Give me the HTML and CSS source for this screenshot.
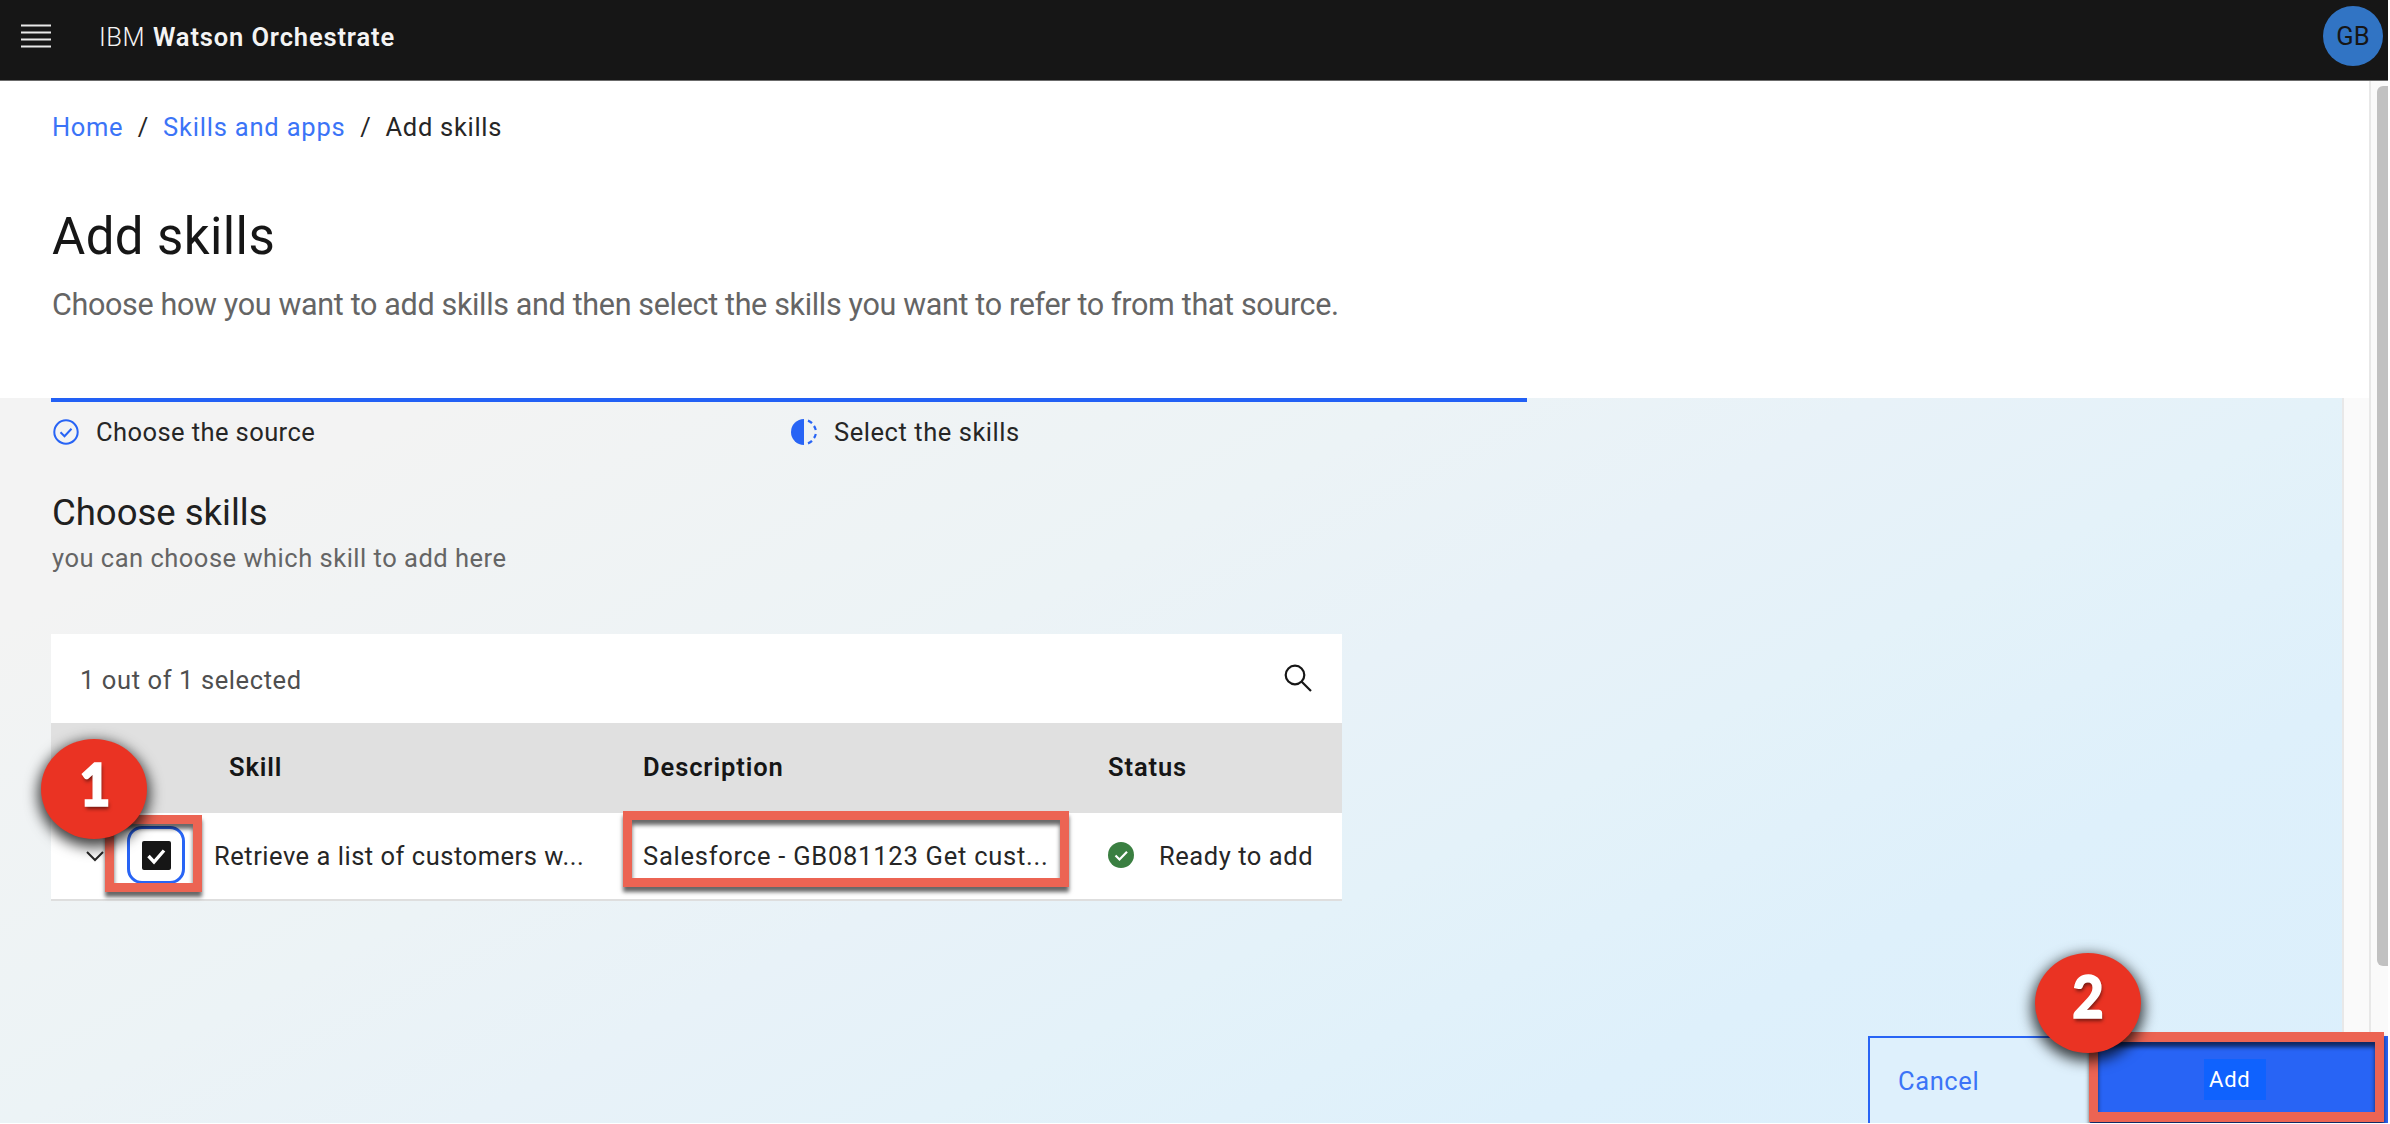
FILE: index.html
```html
<!DOCTYPE html>
<html lang="en">
<head>
<meta charset="utf-8">
<title>IBM Watson Orchestrate</title>
<link rel="stylesheet" href="styles.css">
</head>
<body>
<header class="topbar">
  <svg class="menu" viewBox="0 0 30 24"><path d="M0 1.5h30M0 8.5h30M0 15.5h30M0 22.5h30"/></svg>
  <div class="brand"><span class="t brand-ibm">IBM</span><b class="t brand-name">Watson Orchestrate</b></div>
  <div class="avatar"><span class="t initials">GB</span></div>
</header>
<div class="viewport">
  <main>
    <section class="intro">
      <nav class="crumbs"><a class="t c-home">Home</a><span class="slash">/</span><a class="t c-skills">Skills and apps</a><span class="slash">/</span><span class="t c-add">Add skills</span></nav>
      <h1><span class="t">Add skills</span></h1>
      <p class="lead"><span class="t">Choose how you want to add skills and then select the skills you want to refer to from that source.</span></p>
    </section>
    <div class="lower">
      <section class="work">
        <div class="steps">
          <div class="step">
            <svg viewBox="0 0 26 26"><circle cx="13" cy="13" r="11.7" fill="none" stroke="#2864f5" stroke-width="2"/><path d="M7.5 13.2l4 4 7-7.4" fill="none" stroke="#2864f5" stroke-width="2"/></svg>
            <span class="t s-source">Choose the source</span>
          </div>
          <div class="step">
            <svg viewBox="0 0 26 26"><path d="M13 0a13 13 0 0 0 0 26z" fill="#2864f5"/><path d="M17 1.6a12 12 0 0 1 4 2.5M23 7a12 12 0 0 1 1.8 4M24.8 15a12 12 0 0 1-1.8 4M21 21.9a12 12 0 0 1-4 2.5" fill="none" stroke="#2864f5" stroke-width="2.2"/></svg>
            <span class="t s-select">Select the skills</span>
          </div>
        </div>
        <h2><span class="t">Choose skills</span></h2>
        <p class="hint"><span class="t">you can choose which skill to add here</span></p>
        <div class="table">
          <div class="toolbar">
            <span class="t count">1 out of 1 selected</span>
            <svg viewBox="0 0 28 28"><circle cx="11" cy="11" r="9.3"/><path d="M17.500 17.500l9.500 9.500"/></svg>
          </div>
          <div class="row head"><span></span><b class="t h-skill">Skill</b><b class="t h-desc">Description</b><b class="t h-status">Status</b></div>
          <div class="row body">
            <div class="select">
              <svg class="chev" viewBox="0 0 18 11"><path d="M1 1l8 8 8-8"/></svg>
              <span class="focus"><svg viewBox="0 0 29 29"><rect width="29" height="29" rx="2" fill="#161616"/><path d="M6.500 15l5.500 6L22 9.500" fill="none" stroke="#fff" stroke-width="3.400"/></svg></span>
              <i class="mark mark-check"></i>
              <i class="badge badge-one"><span>1</span></i>
            </div>
            <span class="t r-skill">Retrieve a list of customers w...</span>
            <div class="desc"><span class="t r-desc">Salesforce - GB081123 Get cust...</span><i class="mark mark-desc"></i></div>
            <div class="status"><svg viewBox="0 0 26 26"><circle cx="13" cy="13" r="13" fill="#3a7f41"/><path d="M7.500 13.500l4 4 7.500-7.700" fill="none" stroke="#fff" stroke-width="2.200"/></svg><span class="t r-status">Ready to add</span></div>
          </div>
        </div>
      </section>
      <div class="side"></div>
    </div>
  </main>
  <div class="scroll"><div class="thumb"></div></div>
  <footer class="actions">
    <button class="cancel"><span class="t">Cancel</span></button>
    <button class="add"><span class="patch"><span class="t">Add</span></span></button>
    <i class="mark mark-add"></i>
    <i class="badge badge-two"><span>2</span></i>
  </footer>
</div>
</body>
</html>
```

FILE: styles.css
```css
html { background: #fff; overflow: hidden; }
* { box-sizing: border-box; }
body { margin: 0; width: 2388px; height: 1123px; overflow: hidden; font: 25.5px/32px Roboto, "Liberation Sans", sans-serif; color: #262626; background: #fff; display: flex; flex-direction: column; }
h1, h2, p { margin: 0; font-weight: 400; }
b { font-weight: 600; color: #161616; }
svg { display: block; flex: none; }
.t { white-space: nowrap; }

.topbar { flex: none; height: 81px; background: #161616; border-bottom: 1px solid #6b6b6b; display: flex; align-items: flex-start; padding: 0 5px 0 21px; color: #f4f4f4; }
.menu { width: 30px; height: 24px; margin-top: 24px; }
.menu path { stroke: #e8e8e8; stroke-width: 2; }
.brand { display: flex; gap: 8px; margin: 21px 0 0 48px; }
.brand b { color: #f4f4f4; }
.brand-ibm { letter-spacing: .5px; font-weight: 300; }
.brand-name { letter-spacing: .86px; }
.avatar { width: 60px; height: 60px; border-radius: 50%; background: #3174c4; margin: 6px 0 0 auto; color: #161616; display: flex; justify-content: center; align-items: center; }

.viewport { flex: 1; min-height: 0; display: flex; position: relative; }
main { flex: 1; display: flex; flex-direction: column; min-width: 0; }
.intro { height: 317px; padding-left: 52px; }
.crumbs { display: flex; padding-top: 30px; }
.crumbs a { color: #3b74f7; }
.c-home { letter-spacing: .6px; }
.c-skills { letter-spacing: .8px; }
.c-add { letter-spacing: .7px; }
.slash { width: 40px; text-align: center; }
h1 { font-size: 51px; line-height: 60px; margin-top: 64px; color: #161616; letter-spacing: .4px; }
.lead { font-size: 30.500px; line-height: 40px; margin-top: 18px; color: #656565; letter-spacing: -.34px; }

.lower { flex: 1; display: flex; }
.work { flex: 1; padding-left: 51px; background: linear-gradient(153deg, #f3f3f3 0%, #f3f3f3 12%, #ecf3f6 38%, #e8f2f8 50%, #e4f2f9 62%, #def0fb 78%, #dbeffc 100%); }
.side { width: 27px; background: #fafafa; border-left: 2px solid #e8e8e8; }
.steps { width: 1476px; border-top: 4px solid #2260f5; display: flex; padding-top: 14px; }
.step { width: 738px; display: flex; align-items: center; gap: 17px; height: 32px; padding-left: 2px; }
.step svg { width: 26px; height: 26px; margin-top: -1px; }
.step .t { margin-top: -1px; }
.s-source { letter-spacing: .42px; }
.s-select { letter-spacing: .55px; }
h2 { font-size: 36.500px; line-height: 44px; margin-top: 43px; padding-left: 1px; color: #202020; }
.hint { margin-top: 7px; padding-left: 1px; color: #656565; letter-spacing: .5px; }

.table { width: 1291px; margin-top: 60px; }
.toolbar { height: 89px; background: #fff; display: flex; justify-content: space-between; padding: 30px 30px 0 29px; color: #4f4f4f; }
.toolbar svg { width: 28px; height: 28px; fill: none; stroke: #161616; stroke-width: 2.200; }
.count { letter-spacing: .6px; }
.row { display: grid; grid-template-columns: 163px 429px 465px 234px; align-items: center; }
.head { height: 90px; background: #e0e0e0; }
.head .t { margin-top: -2px; letter-spacing: .9px; }
.h-skill { padding-left: 15px; }
.body { height: 88px; background: #fff; border-bottom: 2px solid #dedede; }
.select { position: relative; height: 86px; display: flex; align-items: flex-start; }
.chev { width: 18px; height: 11px; margin: 38px 0 0 35px; fill: none; stroke: #262626; stroke-width: 2; }
.focus { width: 58px; height: 58px; margin: 13px 0 0 23px; border: 3px solid #2864f5; border-radius: 15px; display: flex; align-items: center; justify-content: center; }
.focus svg { width: 29px; height: 29px; }
.r-skill { letter-spacing: .52px; }
.desc { position: relative; }
.r-desc { letter-spacing: .76px; }
.status { display: flex; align-items: center; gap: 25px; }
.status svg { width: 26px; height: 26px; margin-top: -3px; }
.r-status { letter-spacing: .55px; }

/* Annotation frames and numbered badges lie over the page */
.mark { position: absolute; border: 9px solid #ec6453; box-shadow: 0 5px 4px rgba(0,0,0,.6), inset 0 5px 4px rgba(0,0,0,.6); }
.mark-check { left: 54px; top: 2px; width: 97px; height: 77px; }
.mark-desc { left: -20px; top: -29px; width: 446px; height: 76px; }
.mark-add { left: 221px; top: -4px; width: 295px; height: 90px; border-width: 10px 9px; }
.badge { position: absolute; width: 106px; height: 100px; border-radius: 50%; background: #ea3323; color: #fff; display: flex; justify-content: center; font: 900 59px/90px Lato, sans-serif; -webkit-text-stroke: 1.500px #fff; text-shadow: 1px 3px 4px rgba(0,0,0,.5); box-shadow: 0 5px 14px 3px rgba(0,0,0,.75); }
.badge span { transform: scaleX(.92); }
.badge-one { left: -10px; top: -74px; }
.badge-one span { margin-left: 3px; }
.badge-two { left: 167px; top: -83px; line-height: 86px; }

.scroll { width: 19px; background: #fafafa; border-left: 2px solid #e8e8e8; padding: 5px 0 0 6px; }
.thumb { height: 880px; background: #c1c1c1; border-radius: 6px 0 0 6px; }
.actions { position: absolute; right: 0; bottom: 0; width: 520px; height: 87px; display: flex; }
button { border: 0; font: inherit; padding: 0; }
.cancel { width: 222px; border: 2px solid #2864f5; border-width: 2px 0 0 2px; background: #def0fc; color: #3b74f7; text-align: left; padding: 0 0 0 28px; letter-spacing: .6px; }
.add { flex: 1; background: #2864f5; color: #fff; display: flex; justify-content: center; align-items: flex-start; padding-top: 23px; }
.patch { width: 62px; height: 41px; background: #0f62fe; margin-right: 8px; padding: 5px 0 0 5px; text-align: left; font-size: 22px; letter-spacing: .8px; }
```
